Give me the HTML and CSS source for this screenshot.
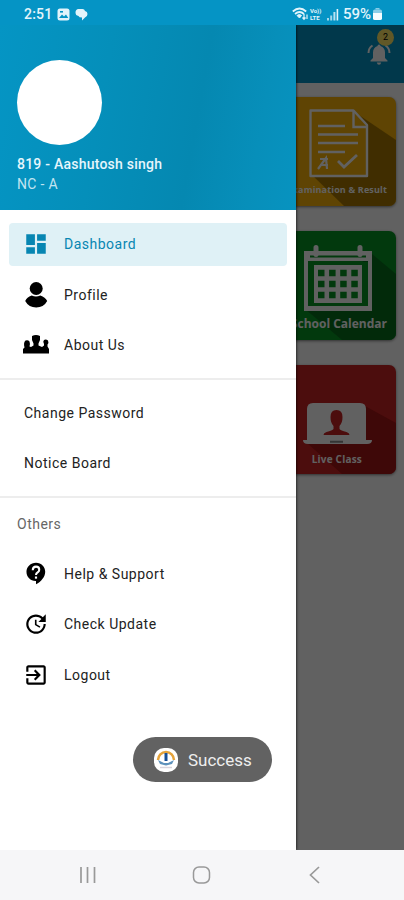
FILE: index.html
```
<!DOCTYPE html>
<html lang="en">

<head>
    <meta charset="UTF-8">
    <title>Dashboard</title>
    <link rel="stylesheet" href="styles.css">
</head>

<body>
    <div class="status-bar">
        <span class="time">2:51</span>
        <svg width="13" height="13" viewBox="0 0 13 13">
            <rect x="0.5" y="0.5" width="12" height="12" rx="2.5" fill="#e3f4fb" />
            <path d="M2 10l3-3.5 2 2 2-2 2.3 3.5z" fill="#0594c5" />
            <rect x="3" y="3" width="3" height="1.6" fill="#0594c5" />
        </svg>
        <svg class="chat" width="13" height="13" viewBox="0 0 13 13">
            <path d="M3 1h4.500q2 0 2.500 2 2.500.5 2.500 3T10 9.500L7 12.500V9.500Q4 9.500 3.500 8 .5 7.500.5 4.500T3 1z" fill="#e3f4fb" />
        </svg>
        <div class="status-right">
            <svg width="17" height="14" viewBox="0 0 17 14" fill="none" stroke="#e3f4fb" stroke-width="1.700">
                <path d="M.8 4.500Q7.500-1.500 14.200 4.500M3 7Q7.500 3 12 7" />
                <path d="M5 8.500Q7.500 6.500 9.500 8.500L7.500 11z" fill="#e3f4fb" stroke-width="1" />
                <path d="M12 7v5M10.500 10.500L12 12.300l1.500-1.800M15 12V7.500" stroke-width="1.200" />
            </svg>
            <span class="volte"><b>Vo))</b><b>LTE</b></span>
            <svg width="12" height="13" viewBox="0 0 12 13" fill="#e3f4fb">
                <path d="M0 10h2v2.500H0zM3.200 7.500h2v5h-2z" opacity=".7" />
                <path d="M6.400 4h2v8.500h-2z" opacity=".8" />
                <path d="M9.600 1h1.600v11.500H9.600z" />
            </svg>
            <span class="percent">59%</span>
            <svg width="9" height="12" viewBox="0 0 9 12">
                <path d="M2.500 0h4v1.500h-4z" fill="#8acde8" />
                <rect y="1.500" width="9" height="10.500" rx="1.800" fill="#8acde8" />
                <path d="M0 5h9v5.200q0 1.800-1.800 1.800H1.800Q0 12 0 10.200z" fill="#f5fcff" />
            </svg>
        </div>
    </div>

    <div class="screen">
        <!-- page under the drawer -->
        <div class="app-bar">
            <svg class="bell" width="24" height="22" viewBox="0 0 24 22" fill="#fff">
                <path d="M12 1.500a1.500 1.500 0 0 1 1.500 1.500Q18 4.500 18 9.500V15l2.500 2.500V18.500H3.500V17.500L6 15V9.500Q6 4.500 10.500 3A1.500 1.500 0 0 1 12 1.500zM9.800 19.500h4.400q-.4 2.200-2.200 2.200t-2.200-2.200z" />
                <path d="M1.500 10Q1.500 5 5.500 2.500M22.500 10Q22.500 5 18.500 2.500" fill="none" stroke="#fff" stroke-width="2" />
            </svg>
            <span class="badge">2</span>
        </div>
        <div class="cards">
            <div class="card yellow">
                <svg width="109" height="109" viewBox="0 0 109 109">
                    <path d="M69 16L109 43v66H57L24 77z" fill="#a87800" />
                    <path d="M23.500 13.500h43L80 28v51H23.500z" fill="#f9b208" stroke="#fff" stroke-width="2.400" stroke-linejoin="round" />
                    <path d="M66.500 13.500V30H80" fill="none" stroke="#fff" stroke-width="2.400" />
                    <path d="M31 29h27M31 37.500h40M31 46h40M31 55h27" stroke="#fff" stroke-width="2.400" />
                    <path d="M31 72l8-11 1 11M33 62h8M33 68h8" fill="none" stroke="#fff" stroke-width="2.200" />
                    <path d="M51 64l6 6 13-12" fill="none" stroke="#fff" stroke-width="2.800" />
                </svg>
                <span class="card-name small">Examination &amp; Result</span>
            </div>
            <div class="card green">
                <svg width="109" height="109" viewBox="0 0 109 109">
                    <path d="M85 23L109 43v66H55L18 78z" fill="#06701c" />
                    <path d="M17 20h68v60H17zM21 30v45h60V30z" fill="#fff" fill-rule="evenodd" />
                    <path d="M21 31h60v44H21z" fill="#079523" />
                    <path d="M23 25.500h56" stroke="#079523" stroke-width="2" />
                    <rect x="27" y="34" width="48" height="38" fill="#fff" />
                    <path d="M29 16.500v7M73 16.500v7" stroke="#fff" stroke-width="5" stroke-linecap="round" />
                    <path d="M31 42h42M31 53h42M31 64h42" stroke="#079523" stroke-width="6.500" stroke-dasharray="6.500 4.600" />
                </svg>
                <span class="card-name">School Calendar</span>
            </div>
            <div class="card red">
                <svg width="109" height="109" viewBox="0 0 109 109">
                    <path d="M78 41L109 58v51H55L20 78z" fill="#a31515" />
                    <path d="M26 38h47q6 0 6 6v31H20V44q0-6 6-6z" fill="#fff" />
                    <path d="M16 75h69q0 4-5 4H21q-5 0-5-4z" fill="#fff" />
                    <path d="M49.500 45q6 0 6 7 0 6-3 9v3q1 1.500 7 3 3 1 3 3H36.500q0-2 3-3 6-1.500 7-3v-3q-3-3-3-9 0-7 6-7z" fill="#c92222" />
                    <path d="M43 76.700h13" stroke="#888" stroke-width="2" />
                </svg>
                <span class="card-name live">Live Class</span>
            </div>
        </div>
        <div class="scrim"></div>

        <!-- drawer -->
        <div class="drawer">
            <div class="drawer-header">
                <div class="avatar"></div>
                <div class="user-name">819 - Aashutosh singh</div>
                <div class="user-class">NC - A</div>
            </div>
            <div class="menu">
                <div class="menu-item active">
                    <svg width="26" height="26" viewBox="0 0 24 24" fill="#0786b2">
                        <path d="M3 13h8V3H3v10zm0 8h8v-6H3v6zm10 0h8V11h-8v10zm0-18v6h8V3h-8z" />
                    </svg>
                    <span>Dashboard</span>
                </div>
                <div class="menu-item">
                    <svg width="26" height="26" viewBox="0 0 26 26">
                        <circle cx="13.200" cy="6.500" r="6.500" />
                        <path d="M2.200 19q1.500-4 6.500-5.500 4.300 2 8.600 0 5 1.500 6.900 5.500-3.500 6.500-11 6.500T2.200 19z" />
                    </svg>
                    <span>Profile</span>
                </div>
                <div class="menu-item">
                    <svg width="26" height="26" viewBox="0 0 26 26">
                        <path d="M9 4q4-2 8 0v4l-1.500 3.500v2l3.500 1.500 2-1.500v-1.500q-1.500-2.500 0-4 2-1 4 .5 1 2-.5 4v2L26 17v4.500H0V17l1.500-1.500q-1.300-5 1-7 2.500-1 4 1 1 3 0 5L8 15l2.500-1.500v-2L9 8z" />
                    </svg>
                    <span>About Us</span>
                </div>
            </div>
            <div class="menu plain">
                <div class="menu-item">Change Password</div>
                <div class="menu-item">Notice Board</div>
            </div>
            <div class="menu others">
                <div class="menu-title">Others</div>
                <div class="menu-item">
                    <svg width="26" height="26" viewBox="0 0 24 24">
                        <path d="M12 1.500C7 1.500 3.200 5.200 3.200 10S7 18.500 11.500 18.500h.5v3c4.900-2.300 8.500-7 8.500-11.500C20.500 5.200 17 1.500 12 1.500z" />
                        <path d="M9 8.500q0-3.300 3-3.300t3 2.800q0 1.500-1.500 2.500T12 13" fill="none" stroke="#fff" stroke-width="1.900" />
                        <path d="M11 14.300h2v2h-2z" fill="#fff" />
                    </svg>
                    <span>Help &amp; Support</span>
                </div>
                <div class="menu-item">
                    <svg width="26" height="26" viewBox="0 0 24 24">
                        <path d="M21 10.120h-6.780l2.740-2.820c-2.730-2.700-7.150-2.800-9.880-.1-2.730 2.710-2.730 7.080 0 9.790s7.150 2.710 9.880 0C18.320 15.650 19 14.080 19 12.100h2c0 1.980-.88 4.550-2.640 6.290-3.510 3.480-9.210 3.480-12.720 0-3.500-3.470-3.530-9.110-.02-12.580s9.140-3.470 12.650 0L21 3v7.120zM12.500 8v4.250l3.500 2.080-.72 1.210L11 13V8h1.500z" />
                    </svg>
                    <span>Check Update</span>
                </div>
                <div class="menu-item">
                    <svg width="26" height="26" viewBox="0 0 24 24">
                        <path d="M10.090 15.590L11.500 17l5-5-5-5-1.410 1.410L12.670 11H3v2h9.670l-2.580 2.590zM19 3H5c-1.110 0-2 .9-2 2v4h2V5h14v14H5v-4H3v4c0 1.100.89 2 2 2h14c1.100 0 2-.9 2-2V5c0-1.100-.9-2-2-2z" />
                    </svg>
                    <span>Logout</span>
                </div>
            </div>
        </div>

        <div class="toast">
            <svg width="26" height="26" viewBox="0 0 26 26">
                <rect x="1" y="1" width="24" height="24" rx="10" fill="#fff" />
                <path d="M5 13a8 8 0 0 1 16 0" fill="none" stroke="#e5a33b" stroke-width="2.500" />
                <path d="M13 6v8" stroke="#174f96" stroke-width="3" />
                <path d="M5 13l6 3h4l6-3-2 4-6 1.500L7 17z" fill="#5d91bb" />
                <path d="M7 20.500h12" stroke="#d8d4dc" stroke-width="1.500" />
            </svg>
            <span>Success</span>
        </div>
    </div>

    <div class="nav-bar">
        <svg width="18" height="18" viewBox="0 0 18 18" fill="none" stroke="#999" stroke-width="1.700">
            <path d="M2 1v16M8.500 1v16M15.500 1v16" />
        </svg>
        <svg width="20" height="20" viewBox="0 0 20 20" fill="none" stroke="#999" stroke-width="1.500">
            <rect x="1.500" y="2" width="16" height="16" rx="5.500" />
        </svg>
        <svg width="18" height="18" viewBox="0 0 18 18" fill="none" stroke="#999" stroke-width="1.700">
            <path d="M12 1L3.500 9l8.500 8" />
        </svg>
    </div>
</body>

</html>
```
FILE: styles.css
```
* {
    padding: 0;
    margin: 0;
    box-sizing: border-box;
}

body {
    width: 404px;
    height: 900px;
    overflow: hidden;
    display: flex;
    flex-direction: column;
    font-family: Roboto, sans-serif;
    background: #fff;
}

svg {
    display: block;
    flex-shrink: 0;
}

.status-bar {
    height: 25px;
    padding: 3px 22px 0 24px;
    display: flex;
    align-items: center;
    background: #0594c5;
    color: #e3f4fb;
}

.time {
    width: 33px;
    font-size: 14px;
    font-weight: 500;
    letter-spacing: 0.2px;
}

.chat {
    margin-left: 5px;
}

.status-right {
    margin-left: auto;
    display: flex;
    align-items: center;
}

.volte {
    width: 13px;
    margin: 0 4px 0 1px;
    font-size: 6px;
    line-height: 7px;
}

.volte b {
    display: block;
}

.percent {
    margin: 0 2px 0 4px;
    font-size: 15px;
    font-weight: 500;
}

/* area between the system bars */
.screen {
    flex: 1;
    position: relative;
    overflow: hidden;
}

.app-bar {
    height: 58px;
    padding: 18px 13px 0 0;
    display: flex;
    justify-content: flex-end;
    position: relative;
    background: #0594c5;
}

.badge {
    position: absolute;
    top: 4px;
    right: 10px;
    width: 17px;
    height: 17px;
    border-radius: 50%;
    background: #ffe866;
    font-size: 9px;
    line-height: 17px;
    text-align: center;
}

.cards {
    padding: 14px 8px 0 0;
    display: flex;
    flex-direction: column;
    align-items: flex-end;
    gap: 25px;
}

.card {
    width: 109px;
    height: 109px;
    border-radius: 7px;
    overflow: hidden;
    position: relative;
    box-shadow: 0 1px 3px rgba(0, 0, 0, .5);
}

.yellow {
    background: #f9b208;
}

.green {
    background: #079523;
}

.red {
    background: #c92222;
}

.card-name {
    position: absolute;
    right: 9px;
    bottom: 9px;
    color: #fff;
    font-family: "Open Sans", sans-serif;
    font-size: 12px;
    font-weight: bold;
    line-height: 14px;
    white-space: nowrap;
}

.card-name.small {
    font-size: 9px;
    letter-spacing: 0.15px;
}

.card-name.live {
    right: 34px;
    bottom: 8px;
    font-size: 10px;
    letter-spacing: 0.2px;
}

.scrim {
    position: absolute;
    inset: 0;
    background: rgba(0, 0, 0, .62);
}

/* drawer */
.drawer {
    position: absolute;
    top: 0;
    left: 0;
    width: 296px;
    height: 100%;
    background: #fff;
    box-shadow: 0 0 3px #000;
}

.drawer-header {
    height: 185px;
    padding: 35px 17px 0;
    background: linear-gradient(100deg, #0595c4 0%, #058fba 35%, #0588b1 65%, #078fba 85%, #0793c0 100%);
    color: #e6f6fc;
    font-size: 14px;
}

.avatar {
    width: 85px;
    height: 85px;
    border-radius: 50%;
    background: #fff;
}

.user-name {
    margin-top: 9px;
    line-height: 20px;
    font-weight: 500;
    letter-spacing: 0.23px;
}

.user-class {
    line-height: 20px;
    color: #c2e4f1;
    letter-spacing: 0.3px;
}

.menu {
    padding: 13px 9px 11px;
    display: flex;
    flex-direction: column;
    gap: 8px;
    border-bottom: 2px solid #ededed;
    color: #222;
    font-size: 14px;
    letter-spacing: 0.5px;
}

.menu-item {
    height: 42.5px;
    padding-left: 14px;
    display: flex;
    align-items: center;
    gap: 15px;
    border-radius: 4px;
}

.menu-item.active {
    background: #dff1f6;
    color: #0786b2;
}

.menu.plain {
    padding-top: 12px;
    padding-bottom: 11px;
}

.plain .menu-item {
    padding-left: 15px;
}

.menu.others {
    padding-top: 14px;
    border-bottom: 0;
}

.menu-title {
    height: 24px;
    margin-bottom: 9px;
    padding-left: 8px;
    line-height: 24px;
    color: #666;
}

/* message */
.toast {
    position: absolute;
    left: 133px;
    top: 712px;
    width: 139px;
    height: 45px;
    padding-left: 20px;
    display: flex;
    align-items: center;
    gap: 9px;
    border-radius: 23px;
    background: #626262;
    color: #eee;
    font-size: 17px;
}

.nav-bar {
    height: 50px;
    padding: 0 79px;
    display: flex;
    align-items: center;
    justify-content: space-between;
    background: #f6f6f8;
}
```
